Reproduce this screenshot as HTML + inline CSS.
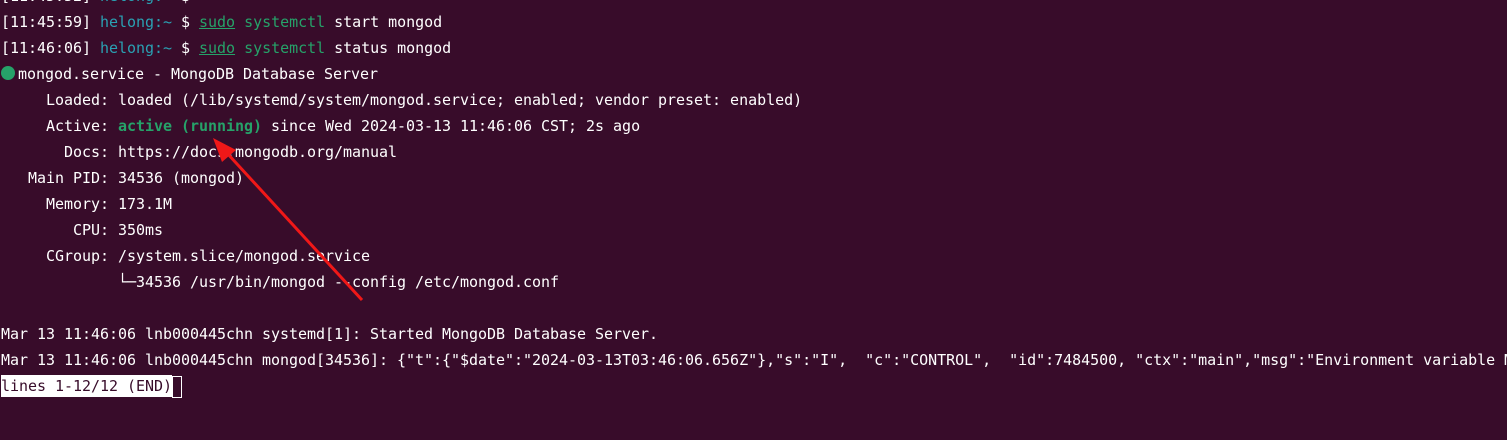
<!DOCTYPE html><html><head><style>
body{margin:0;width:1507px;height:440px;background:#380c2a;overflow:hidden;position:relative}
pre{margin:0;position:absolute;top:-17px;left:1px;width:1506px;overflow:hidden;font:15px/26px "DejaVu Sans Mono","Liberation Mono",monospace;letter-spacing:-0.03px;color:#fff;white-space:pre}
.c{color:#2aa1b3}.g{color:#26a269}.u{text-decoration:underline}.b{font-weight:bold;color:#26a269}
.sel{background:#fff;color:#380c2a;display:inline-block;line-height:22px}
.cur{display:inline-block;width:8px;height:20px;border:1px solid #fff;vertical-align:middle}
.dot{display:inline-block;width:14px;height:14px;border-radius:50%;background:#26a269;vertical-align:-1px;margin-right:3px}
</style></head><body>
<pre>[11:45:52] <span class="c">helong:~</span> $
[11:45:59] <span class="c">helong:~</span> $ <span class="g u">sudo</span> <span class="g">systemctl</span> start mongod
[11:46:06] <span class="c">helong:~</span> $ <span class="g u">sudo</span> <span class="g">systemctl</span> status mongod
<span class="dot"></span>mongod.service - MongoDB Database Server
     Loaded: loaded (/lib/systemd/system/mongod.service; enabled; vendor preset: enabled)
     Active: <span class="b">active (running)</span> since Wed 2024-03-13 11:46:06 CST; 2s ago
       Docs: https://docs.mongodb.org/manual
   Main PID: 34536 (mongod)
     Memory: 173.1M
        CPU: 350ms
     CGroup: /system.slice/mongod.service
             └─34536 /usr/bin/mongod --config /etc/mongod.conf

Mar 13 11:46:06 lnb000445chn systemd[1]: Started MongoDB Database Server.
Mar 13 11:46:06 lnb000445chn mongod[34536]: {"t":{"$date":"2024-03-13T03:46:06.656Z"},"s":"I",  "c":"CONTROL",  "id":7484500, "ctx":"main","msg":"Environment variable M
<span class="sel">lines 1-12/12 (END)</span><span class="cur"></span></pre>
<svg width="1507" height="440" style="position:absolute;left:0;top:0">
<line x1="362" y1="300" x2="226" y2="152" stroke="#f01818" stroke-width="3"/>
<polygon points="213,138 236,150 222,162" fill="#f01818"/>
</svg>
</body></html>
